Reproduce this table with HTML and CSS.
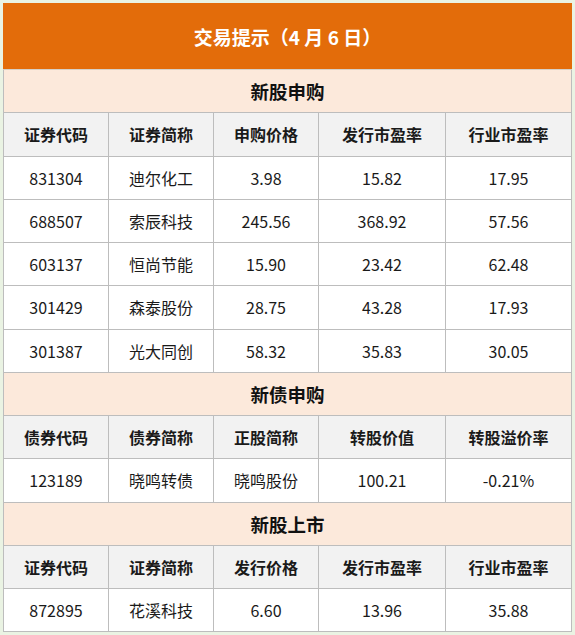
FILE: index.html
```html
<!DOCTYPE html>
<html lang="zh">
<head>
<meta charset="utf-8">
<link rel="stylesheet" href="styles.css">
</head>
<body>
<div class="wrap">
<table class="tips">
  <colgroup>
    <col class="c1"><col class="c2"><col class="c3"><col class="c4"><col class="c5">
  </colgroup>
  <tr><td colspan="5" class="title">交易提示（4 月 6 日）</td></tr>
  <tr><td colspan="5" class="section">新股申购</td></tr>
  <tr class="head"><td>证券代码</td><td>证券简称</td><td>申购价格</td><td>发行市盈率</td><td>行业市盈率</td></tr>
  <tr><td>831304</td><td>迪尔化工</td><td>3.98</td><td>15.82</td><td>17.95</td></tr>
  <tr><td>688507</td><td>索辰科技</td><td>245.56</td><td>368.92</td><td>57.56</td></tr>
  <tr><td>603137</td><td>恒尚节能</td><td>15.90</td><td>23.42</td><td>62.48</td></tr>
  <tr><td>301429</td><td>森泰股份</td><td>28.75</td><td>43.28</td><td>17.93</td></tr>
  <tr><td>301387</td><td>光大同创</td><td>58.32</td><td>35.83</td><td>30.05</td></tr>
  <tr><td colspan="5" class="section">新债申购</td></tr>
  <tr class="head"><td>债券代码</td><td>债券简称</td><td>正股简称</td><td>转股价值</td><td>转股溢价率</td></tr>
  <tr><td>123189</td><td>晓鸣转债</td><td>晓鸣股份</td><td>100.21</td><td>-0.21%</td></tr>
  <tr><td colspan="5" class="section">新股上市</td></tr>
  <tr class="head"><td>证券代码</td><td>证券简称</td><td>发行价格</td><td>发行市盈率</td><td>行业市盈率</td></tr>
  <tr><td>872895</td><td>花溪科技</td><td>6.60</td><td>13.96</td><td>35.88</td></tr>
</table>
</div>
</body>
</html>
```
FILE: styles.css
```css
html, body {
  margin: 0;
  padding: 0;
  background: #eaf3e3;
}
.wrap {
  padding: 3px 4px 4px 3px;
}
.tips {
  width: 568px;
  border-collapse: collapse;
  table-layout: fixed;
  font-family: "Noto Sans CJK SC", "Microsoft YaHei", sans-serif;
  font-size: 16px;
  color: #1a1a1a;
  background: #fff;
}
.c1, .c2, .c3 { width: 105px; }
.c4 { width: 127px; }
.c5 { width: 126px; }
.tips td {
  border: 1px solid #bdbdbd;
  height: 42.25px;
  padding: 0;
  text-align: center;
  vertical-align: middle;
  line-height: 20px;
}
.tips td.title {
  height: 65px;
  background: #e36c0a;
  color: #fff;
  font-weight: bold;
  font-size: 19px;
  border-color: #e36c0a;
  border-bottom-color: #d7d0c6;
}
.tips td.section {
  background: #fce9db;
  font-weight: bold;
  font-size: 18.5px;
  color: #111;
}
.head td {
  background: #f2f2f2;
  font-weight: bold;
  color: #1a1a1a;
}
```
